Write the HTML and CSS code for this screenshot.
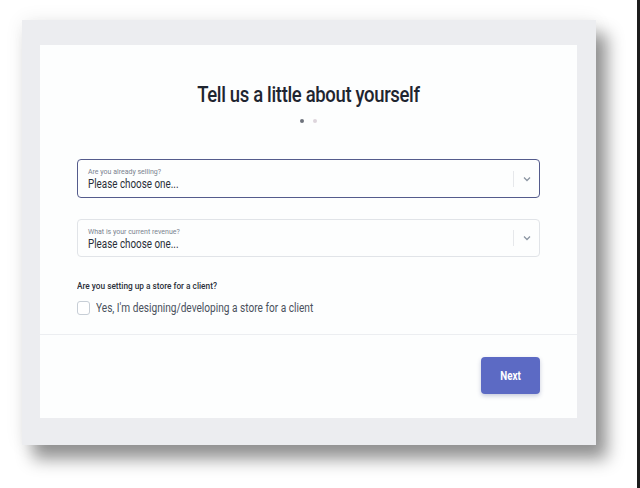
FILE: index.html
```html
<!DOCTYPE html>
<html lang="en">
<head>
    <meta charset="UTF-8">
    <meta name="viewport" content="width=device-width, initial-scale=1.0">
    <title>Tell us a little about yourself</title>
    <link rel="stylesheet" href="styles.css">
</head>
<body>

    <div class="panel">
        <div class="card">
            <div class="card-body">
                <h1><span>Tell us a little about yourself</span></h1>

                <div class="steps">
                    <span class="dot active"></span>
                    <span class="dot"></span>
                </div>

                <!-- Select fields -->
                <div class="select focused">
                    <div class="select-text">
                        <span class="select-label">Are you already selling?</span>
                        <span class="select-value">Please choose one...</span>
                    </div>
                    <span class="select-sep"></span>
                    <svg class="chevron" width="8" height="6" viewBox="0 0 8 6">
                        <path d="M1 1.5 L4 4.5 L7 1.5" fill="none" stroke="#8c96a3" stroke-width="1.3"/>
                    </svg>
                </div>

                <div class="select">
                    <div class="select-text">
                        <span class="select-label">What is your current revenue?</span>
                        <span class="select-value">Please choose one...</span>
                    </div>
                    <span class="select-sep"></span>
                    <svg class="chevron" width="8" height="6" viewBox="0 0 8 6">
                        <path d="M1 1.5 L4 4.5 L7 1.5" fill="none" stroke="#8c96a3" stroke-width="1.3"/>
                    </svg>
                </div>

                <p class="question">Are you setting up a store for a client?</p>
                <label class="check-row">
                    <span class="checkbox"></span>
                    <span class="check-text">Yes, I'm designing/developing a store for a client</span>
                </label>
            </div>

            <div class="card-footer">
                <button class="next"><span>Next</span></button>
            </div>
        </div>
    </div>

</body>
</html>
```

FILE: styles.css
```css
html {
    background: #ffffff;
}

body {
    margin: 0;
    padding: 20px 0 0 22px;
    height: 488px;
    box-sizing: border-box;
    font-family: Roboto, "Liberation Sans", sans-serif;
    color: #212b36;
    border-right: 3px solid #1c1c1c;
}

.panel {
    width: 574px;
    height: 425px;
    box-sizing: border-box;
    padding: 25px 19px 27px 18px;
    background: #ecedf0;
    box-shadow: 11px 14px 16px rgba(0, 0, 0, 0.42), 0 0 18px rgba(0, 0, 0, 0.07);
}

.card {
    height: 373px;
    background: #fdfefe;
    display: flex;
    flex-direction: column;
}

.card-body {
    padding: 37px 37px 0;
    height: 290px;
    box-sizing: border-box;
    border-bottom: 1px solid #eceef1;
}

/* the screenshot font is a narrow one, so squeeze Roboto a little */
h1 {
    margin: 0;
    font-size: 22px;
    line-height: 26px;
    font-weight: 500;
    text-align: center;
    color: #1f2530;
}

h1 span {
    display: inline-block;
    letter-spacing: -0.4px;
    transform: scaleX(0.84);
}

.steps {
    display: flex;
    justify-content: center;
    gap: 9px;
    margin-top: 11px;
    height: 4px;
}

.dot {
    width: 4px;
    height: 4px;
    border-radius: 50%;
    background: #ddd5dc;
}

.dot.active {
    background: #6e737c;
}

.select {
    display: flex;
    align-items: center;
    height: 39px;
    box-sizing: border-box;
    margin-top: 36px;
    padding: 0 6px 0 10px;
    border: 1px solid #e1e4e8;
    border-radius: 4px;
}

.select.focused {
    border-color: #545b8c;
}

.select + .select {
    margin-top: 21px;
    height: 38px;
}

.select-text {
    flex: 1;
    display: flex;
    flex-direction: column;
    align-items: flex-start;
    padding-top: 3px;
}

.select-label {
    font-size: 7px;
    line-height: 9px;
    color: #7a838f;
}

.select-value {
    font-size: 12px;
    line-height: 15px;
    color: #2a2f38;
    transform: scaleX(0.82);
    transform-origin: left center;
}

.select-sep {
    width: 1px;
    height: 16px;
    background: #e6e8eb;
    margin-right: 9px;
}

.chevron {
    margin-right: 2px;
}

.question {
    margin: 23px 0 0;
    font-size: 9.5px;
    line-height: 12px;
    font-weight: 500;
    color: #2b303a;
    transform: scaleX(0.87);
    transform-origin: left center;
}

.check-row {
    display: flex;
    align-items: center;
    gap: 6px;
    margin-top: 8px;
    font-size: 12.5px;
    color: #4a515c;
}

.check-text {
    transform: scaleX(0.81);
    transform-origin: left center;
    white-space: nowrap;
}

.checkbox {
    flex: none;
    width: 11px;
    height: 12px;
    border: 1px solid #c7ced6;
    border-radius: 3px;
    background: #ffffff;
}

.card-footer {
    flex: 1;
    display: flex;
    justify-content: flex-end;
    align-items: flex-start;
    padding: 22px 37px 0 0;
}

.next {
    width: 59px;
    height: 37px;
    border: none;
    border-radius: 4px;
    background: #5c6ac4;
    color: #ffffff;
    font-family: Roboto, "Liberation Sans", sans-serif;
    font-size: 12px;
    font-weight: 700;
    box-shadow: 0 2px 4px rgba(40, 50, 120, 0.25);
    cursor: pointer;
}

.next span {
    display: inline-block;
    transform: scaleX(0.82);
}
```
